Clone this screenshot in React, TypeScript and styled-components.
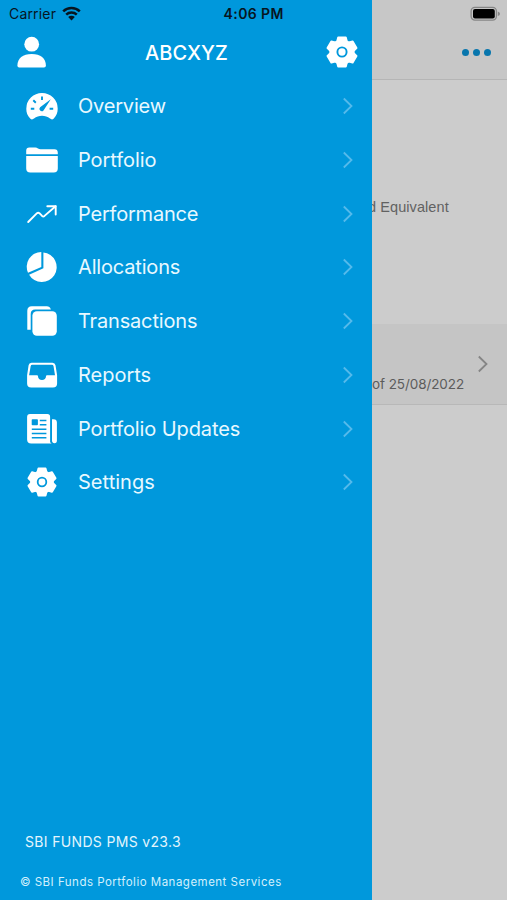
import React from "react";
import styled, { createGlobalStyle } from "styled-components";

const BLUE = "#0098dc";

const GlobalStyle = createGlobalStyle`
  * { box-sizing: border-box; }
  body { margin: 0; overflow: hidden; font-family: Inter, sans-serif; }
  svg { display: block; flex: none; }
`;

const Screen = styled.div`
  display: grid;
  grid-template-columns: 372px 135px;
  width: 507px;
  height: 900px;
  background: #ccc;
`;

const Drawer = styled.aside`
  z-index: 1;
  display: flex;
  flex-direction: column;
  height: 900px;
  background: ${BLUE};
  color: #fff;
`;

const StatusBar = styled.div`
  display: flex;
  align-items: center;
  height: 27px;
  padding-left: 9px;
  color: #07151f;
`;

const Carrier = styled.span`
  width: 53px;
  font-size: 14px;
  letter-spacing: 0.18px;
  line-height: 27px;
`;

const Clock = styled.span`
  margin-left: 142.5px;
  font-size: 14px;
  font-weight: 600;
  letter-spacing: 0.42px;
  line-height: 27px;
  white-space: nowrap;
`;

const DrawerHeader = styled.header`
  display: flex;
  align-items: center;
  justify-content: space-between;
  height: 50px;
  padding: 0 14px 0 16px;
`;

const UserName = styled.h1`
  margin: 0;
  padding: 1px 1px 0 0;
  font-size: 20px;
  font-weight: 500;
  letter-spacing: 0.05px;
`;

const Menu = styled.nav`
  display: flex;
  flex-direction: column;
  padding-top: 2.25px;
`;

const MenuItem = styled.a`
  display: flex;
  align-items: center;
  height: 53.75px;
  padding: 0 18px 0 26px;
`;

const IconSlot = styled.span`
  display: flex;
  justify-content: center;
  width: 32px;
`;

const MenuLabel = styled.span<{ $spacing: number }>`
  flex: 1;
  margin-left: 20px;
  font-size: 20px;
  line-height: 24px;
  letter-spacing: ${(p) => p.$spacing}px;
  color: #e8f8ff;
`;

const DrawerFooter = styled.footer`
  display: flex;
  flex-direction: column;
  margin-top: auto;
`;

const Version = styled.div`
  padding-left: 25px;
  font-size: 14px;
  line-height: 20px;
  letter-spacing: 0.33px;
  color: #e3f5fd;
`;

const Copyright = styled.div`
  padding: 22px 0 9px 20px;
  font-size: 11.5px;
  line-height: 17px;
  letter-spacing: 0.49px;
  color: #d3f0fc;
`;

const Content = styled.main`
  display: flex;
  flex-direction: column;
  background: #ccc;
`;

const ContentHeader = styled.header`
  display: flex;
  flex-direction: column;
  align-items: flex-end;
  height: 80px;
  border-bottom: 1px solid #b5b5b5;
  background: #c7c7c7;
`;

const BatteryArea = styled.div`
  display: flex;
  align-items: center;
  height: 27px;
  padding-right: 6px;
`;

const MoreButton = styled.div`
  display: flex;
  align-items: center;
  gap: 4px;
  height: 50px;
  padding-right: 16px;
`;

const Dot = styled.span`
  width: 7px;
  height: 7px;
  border-radius: 50%;
  background: #0876ad;
`;

const Summary = styled.section`
  display: flex;
  align-items: flex-end;
  height: 244px;
  padding-bottom: 107px;
`;

const SummaryText = styled.span`
  margin-left: -4px;
  font: 14.5px/20px "Liberation Sans", sans-serif;
  letter-spacing: 0.08px;
  color: #626262;
  white-space: nowrap;
`;

const DateRow = styled.section`
  display: flex;
  height: 81px;
  border-bottom: 1px solid #b8b8b8;
  background: #c5c5c5;
`;

const DateText = styled.span`
  align-self: flex-end;
  width: 104.5px;
  padding-bottom: 10px;
  font-size: 13.5px;
  line-height: 20px;
  letter-spacing: -0.08px;
  color: #5c5c5c;
  white-space: nowrap;
`;

const RowArrow = styled.span`
  padding-top: 31px;
`;

const GearIcon = ({ size = 32 }: { size?: number }) => (
  <svg width={size} height={size} viewBox="-16 -16 32 32">
    <circle r="12.6" fill="#fff" />
    {[0, 60, 120, 180, 240, 300].map((angle) => (
      <path
        key={angle}
        d="M-5.2 -9 L-3.8 -14.5 H3.8 L5.2 -9 Z"
        transform={`rotate(${angle})`}
        fill="#fff"
        stroke="#fff"
        strokeWidth="2"
        strokeLinejoin="round"
      />
    ))}
    <circle r="4.6" fill="none" stroke={BLUE} strokeWidth="1.9" />
  </svg>
);

const UserIcon = () => (
  <svg width="32" height="32" viewBox="0 0 32 32" fill="#fff">
    <circle cx="15.7" cy="8.2" r="7.4" />
    <path d="M1.4 29.5C1.4 22.3 6.8 18 15.7 18S29.9 22.3 29.9 29.5Q29.9 31.5 28 31.5H3.2Q1.4 31.5 1.4 29.5Z" />
  </svg>
);

const GaugeIcon = () => (
  <svg width="32" height="32" viewBox="0 0 32 32">
    <path
      d="M4.2 28.5C1.4 25.6.3 22.5.3 18.7a15.7 15.7 0 0 1 31.4 0c0 3.8-1.2 6.9-3.9 9.8-1.2 1.2-2.4 1.2-3.8.1-4.7-3.8-11.3-3.8-16 0-1.4 1.1-2.6 1.1-3.8-.1Z"
      fill="#fff"
    />
    <path d="M16 6.5v3.6M7.3 10.3l2.5 2.4M4.8 18.7h3.5M23.6 18.7h3.6" stroke={BLUE} strokeWidth="1.9" />
    <path d="M24.8 9.3 14.1 17.2a2.35 2.35 0 1 0 3.4 3.3Z" fill={BLUE} />
  </svg>
);

const FolderIcon = () => (
  <svg width="32" height="32" viewBox="0 0 32 32" fill="#fff">
    <path d="M.2 10.2V6.7Q.2 3.5 3.4 3.5h6Q10.7 3.5 12 4.5q1.2.8 2.5.8h13.9q3.4 0 3.4 3.4v1.5Z" />
    <path d="M.2 12h31.6v12.4q0 4.1-4.1 4.1H4.3q-4.1 0-4.1-4.1Z" />
  </svg>
);

const TrendIcon = () => (
  <svg width="32" height="32" viewBox="0 0 32 32" fill="none" stroke="#fff" strokeWidth="1.9" strokeLinecap="round" strokeLinejoin="round">
    <path d="M2.2 24 11 15.2q1.2-1 2.4 0l2.7 2.7q1.2 1 2.4 0L29.6 8.2" />
    <path d="M21.3 8.2h8.4v8.3" />
  </svg>
);

const PieIcon = () => (
  <svg width="32" height="32" viewBox="0 0 32 32" fill="#fff">
    <path d="M15.3 1v15L2 21.8A14.8 14.8 0 0 1 15.3 1Z" />
    <path d="M17.4 1.5A14.8 14.8 0 1 1 3.1 23.7l14.3-6.4Z" />
  </svg>
);

const CopyIcon = () => (
  <svg width="32" height="32" viewBox="0 0 32 32" fill="#fff">
    <path d="M1.3 24.8V5.8Q1.3 1.3 5.8 1.3h15q3 0 4.1 3.3H9.2Q4.7 4.6 4.7 9.1v15.7q-2.5 0-3.4 0Z" />
    <rect x="6.4" y="6.3" width="24.4" height="24.4" rx="4.5" />
  </svg>
);

const InboxIcon = () => (
  <svg width="32" height="32" viewBox="0 0 32 32" fill="#fff">
    <path
      fillRule="evenodd"
      d="M5.5 3.7h21q2.5 0 3 2.5l1.6 10v8.2q0 4.1-4.1 4.1H5.2q-4.1 0-4.1-4.1v-8.2l1.5-10q.4-2.5 2.9-2.5Zm.7 2q-1.2 0-1.5 1.2L3.1 16.2H11q1 0 1 1c0 2.2 1.6 3.8 4 3.8s4-1.6 4-3.8q0-1 1-1h8L27.5 7q-.3-1.3-1.6-1.3Z"
    />
  </svg>
);

const NewsIcon = () => (
  <svg width="32" height="32" viewBox="0 0 32 32" fill="#fff">
    <path d="M4 1h17.4q2.7 0 2.7 2.7v25q0 1.2 1.6 1.9H5.2q-4.1 0-4.1-4.1V3.9Q1.1 1 4 1Z" />
    <path d="M26 6.3h1.5q3.4 0 3.4 3.4v17.8q0 2.7-2.4 2.7T26 27.5Z" />
    <g fill={BLUE}>
      <rect x="5.7" y="6.2" width="6.2" height="6.1" rx=".8" />
      <path d="M13.8 6.7h6.6v1.6h-6.6zM13.8 11h6.6v1.6h-6.6zM5.8 15.4h14.6V17H5.8zM5.8 19.7h14.6v1.6H5.8zM5.8 24h14.6v1.6H5.8z" />
    </g>
  </svg>
);

const Chevron = ({ color }: { color: string }) => (
  <svg width="12" height="18" viewBox="0 0 12 18" fill="none" stroke={color} strokeWidth="1.8">
    <path d="m1.8 1.5 7.7 7.5-7.7 7.5" />
  </svg>
);

const WifiIcon = () => (
  <svg width="19" height="16" viewBox="0 0 19 16">
    <g fill="none" stroke="#07151f" strokeWidth="2.5">
      <path d="M1.2 5.3a11.9 11.9 0 0 1 16.6 0M4.2 8.6a7.7 7.7 0 0 1 10.6 0" />
    </g>
    <path d="M6.2 11a4.7 4.7 0 0 1 6.6 0L9.5 14.5Z" fill="#07151f" />
  </svg>
);

const BatteryIcon = () => (
  <svg width="31" height="16" viewBox="0 0 31 16">
    <rect x="1.1" y="1.3" width="25.3" height="12.8" rx="3.8" fill="none" stroke="#868686" strokeWidth="1.3" />
    <rect x="3" y="3" width="21.8" height="9.4" rx="2" fill="#000" />
    <path d="M27.8 5.4q2.2.6 2.2 2.3T27.8 10Z" fill="#868686" />
  </svg>
);

const items = [
  { label: "Overview", icon: <GaugeIcon />, spacing: -0.2 },
  { label: "Portfolio", icon: <FolderIcon />, spacing: -0.08 },
  { label: "Performance", icon: <TrendIcon />, spacing: -0.2 },
  { label: "Allocations", icon: <PieIcon />, spacing: -0.17 },
  { label: "Transactions", icon: <CopyIcon />, spacing: -0.17 },
  { label: "Reports", icon: <InboxIcon />, spacing: -0.02 },
  { label: "Portfolio Updates", icon: <NewsIcon />, spacing: -0.09 },
  { label: "Settings", icon: <GearIcon size={30} />, spacing: 0.03 },
];

export default function App() {
  return (
    <>
      <GlobalStyle />
      <Screen>
        <Drawer>
          <StatusBar>
            <Carrier>Carrier</Carrier>
            <WifiIcon />
            <Clock>4:06 PM</Clock>
          </StatusBar>
          <DrawerHeader>
            <UserIcon />
            <UserName>ABCXYZ</UserName>
            <GearIcon />
          </DrawerHeader>
          <Menu>
            {items.map(({ label, icon, spacing }) => (
              <MenuItem key={label}>
                <IconSlot>{icon}</IconSlot>
                <MenuLabel $spacing={spacing}>{label}</MenuLabel>
                <Chevron color="#55baeb" />
              </MenuItem>
            ))}
          </Menu>
          <DrawerFooter>
            <Version>SBI FUNDS PMS v23.3</Version>
            <Copyright>© SBI Funds Portfolio Management Services</Copyright>
          </DrawerFooter>
        </Drawer>
        <Content>
          <ContentHeader>
            <BatteryArea>
              <BatteryIcon />
            </BatteryArea>
            <MoreButton>
              <Dot />
              <Dot />
              <Dot />
            </MoreButton>
          </ContentHeader>
          <Summary>
            <SummaryText>d Equivalent</SummaryText>
          </Summary>
          <DateRow>
            <DateText>of 25/08/2022</DateText>
            <RowArrow>
              <Chevron color="#858585" />
            </RowArrow>
          </DateRow>
        </Content>
      </Screen>
    </>
  );
}
